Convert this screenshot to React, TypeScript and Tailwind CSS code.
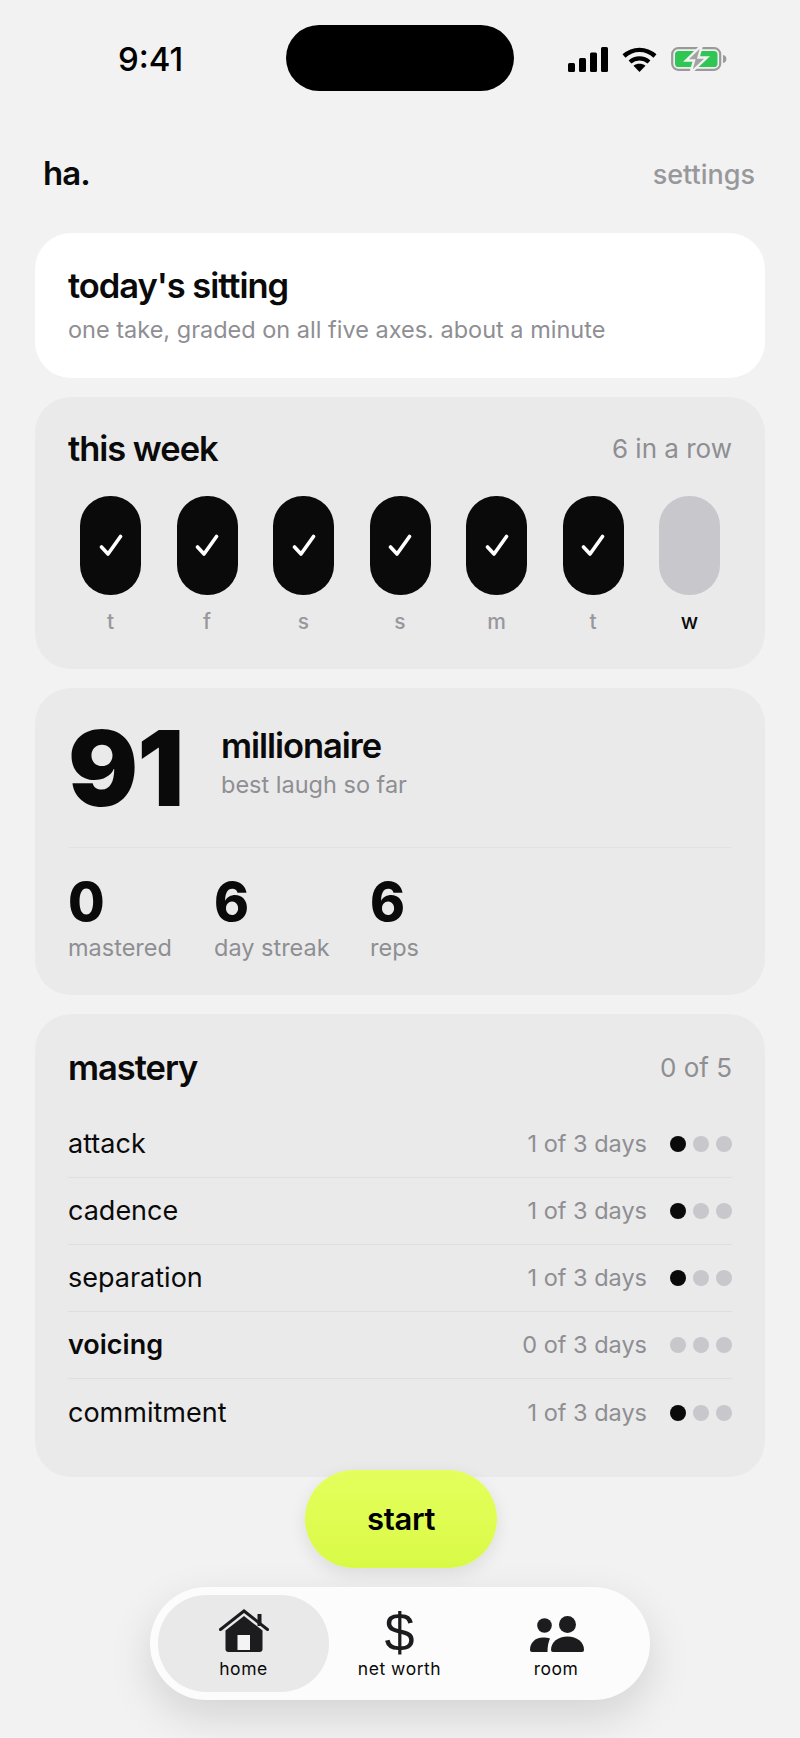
import React from 'react'

const DAYS = [
  { label: 't', done: true },
  { label: 'f', done: true },
  { label: 's', done: true },
  { label: 's', done: true },
  { label: 'm', done: true },
  { label: 't', done: true },
  { label: 'w', done: false },
]

const AXES = [
  { name: 'attack', days: 1 },
  { name: 'cadence', days: 1 },
  { name: 'separation', days: 1 },
  { name: 'voicing', days: 0, bold: true },
  { name: 'commitment', days: 1 },
]

const STATS = [
  { value: '0', label: 'mastered', width: 'w-[146px]' },
  { value: '6', label: 'day streak', width: 'w-[156px]' },
  { value: '6', label: 'reps', width: '' },
]

function StatusIcons() {
  return (
    <div className="flex items-center gap-[14px]">
      <svg width="40" height="25" viewBox="0 0 40 25" fill="#000">
        <rect x="0" y="16" width="7" height="9" rx="1.5" />
        <rect x="11" y="11" width="7" height="14" rx="1.5" />
        <rect x="22" y="5.500" width="7" height="19.500" rx="1.5" />
        <rect x="33" y="0" width="7" height="25" rx="1.5" />
      </svg>
      <svg width="35" height="25" viewBox="0 0 35 25" fill="none" stroke="#000">
        <path d="M2 9C11 .8 24 .8 33 9" strokeWidth="4.400" />
        <path d="M8 15c5.500-4.800 13.500-4.800 19 0" strokeWidth="4.200" />
        <path d="M17.500 25l-6-6.300c3.500-2.600 8.500-2.600 12 0z" fill="#000" stroke="none" />
      </svg>
      <svg width="56" height="28" viewBox="0 0 56 28" fill="none">
        <rect x="1.200" y="3.200" width="48" height="21.600" rx="6" stroke="#9a9a9a" strokeWidth="2.200" />
        <rect x="4" y="6" width="42.500" height="16" rx="3.600" fill="#2fc653" />
        <path d="M52 10c2.400.6 3.400 2 3.400 4s-1 3.400-3.400 4z" fill="#9a9a9a" />
        <path d="M31 0L15 15.500h8L19.500 28 36 12.500h-8.500z" fill="#a3a3a3" stroke="#f2f2f2" strokeWidth="2.400" />
      </svg>
    </div>
  )
}

function Check() {
  return (
    <svg width="24" height="23" viewBox="0 0 24 23" fill="none" stroke="#fff" strokeWidth="3.600" strokeLinecap="round" strokeLinejoin="round">
      <path d="M2.500 13L9 20L21.500 2.500" />
    </svg>
  )
}

function HomeIcon() {
  return (
    <svg width="50" height="44" viewBox="0 0 50 44" fill="#1c1c1e">
      <path d="M1.500 20.500L25 2L48.500 20.500" fill="none" stroke="#1c1c1e" strokeWidth="3" strokeLinecap="round" strokeLinejoin="miter" />
      <rect x="38.500" y="5" width="4" height="12" />
      <path d="M6.500 21.500L25 7l18.500 14.500V40a3 3 0 0 1-3 3h-31a3 3 0 0 1-3-3z" />
      <rect x="18.500" y="26" width="12.500" height="15" fill="#f4f4f4" />
    </svg>
  )
}

function RoomIcon() {
  return (
    <svg width="56" height="38" viewBox="0 0 56 38" fill="#1c1c1e">
      <circle cx="14.500" cy="10.500" r="7.300" />
      <circle cx="37.500" cy="9.500" r="8.500" />
      <path d="M0 35c0-7 5-12.500 13-12.500 2.500 0 5 .4 7 1-1.500 3.500-2.500 7.500-2.500 13.500H2a2 2 0 0 1-2-2z" />
      <path d="M21 35c0-8 7-13.500 16.500-13.500S54 27 54 35a2 2 0 0 1-2 2H23a2 2 0 0 1-2-2z" />
    </svg>
  )
}

export default function App() {
  return (
    <div className="relative h-[1738px] w-[800px] overflow-hidden bg-[#f2f2f2] font-['Inter',sans-serif] text-[#0a0a0a]">
      {/* status bar */}
      <div className="flex h-[91px] items-start pl-[118px] pt-[25px]">
        <span className="mt-[16px] w-[168px] text-[33px] leading-[36px] font-medium text-black">9:41</span>
        <div className="h-[66px] w-[228px] rounded-[33px] bg-black" />
        <div className="ml-[54px] mt-[20px]">
          <StatusIcons />
        </div>
      </div>

      {/* header */}
      <div className="flex items-start justify-between pl-[43px] pr-[45px] pt-[62px]">
        <span className="text-[33px] leading-[40px] font-semibold tracking-[-0.03em]">ha.</span>
        <span className="mt-[2px] text-[27px] leading-[40px] font-medium text-[#98989c]">settings</span>
      </div>

      <div className="mx-[35px] mt-[38px] flex flex-col gap-[19px]">
        {/* today's sitting */}
        <div className="h-[145px] rounded-[36px] bg-white px-[33px] pt-[32px]">
          <div className="text-[34.500px] leading-[42px] font-semibold tracking-[-0.03em]">today's sitting</div>
          <div className="mt-[8px] text-[23.500px] leading-[30px] text-[#8e8e93]">one take, graded on all five axes. about a minute</div>
        </div>

        {/* this week */}
        <div className="h-[272px] rounded-[36px] bg-[#eaeaea] px-[33px] pt-[31px]">
          <div className="flex items-center justify-between">
            <span className="text-[34.500px] leading-[42px] font-semibold tracking-[-0.03em]">this week</span>
            <span className="text-[26px] leading-[42px] text-[#8e8e93]">6 in a row</span>
          </div>
          <div className="mt-[26px] flex justify-between px-[12px]">
            {DAYS.map((d, i) => (
              <div key={i} className="flex w-[61px] flex-col items-center">
                <div className={`flex h-[99px] w-[61px] items-center justify-center rounded-[30px] ${d.done ? 'bg-[#0a0a0a]' : 'bg-[#c7c7cc]'}`}>
                  {d.done && <Check />}
                </div>
                <span className={`mt-[13px] text-[21px] leading-[28px] font-medium ${d.done ? 'text-[#98989c]' : 'text-[#0a0a0a]'}`}>{d.label}</span>
              </div>
            ))}
          </div>
        </div>

        {/* best laugh */}
        <div className="h-[307px] rounded-[36px] bg-[#eaeaea] px-[33px] pt-[25px]">
          <div className="flex items-center border-b border-[#e2e2e2] pb-[24px]">
            <span className="w-[153px] text-[104px] leading-[110px] font-black tracking-[-0.01em]">91</span>
            <div className="pb-[10px]">
              <div className="text-[34.500px] leading-[40px] font-semibold tracking-[-0.03em]">millionaire</div>
              <div className="mt-[4px] text-[23.500px] leading-[30px] text-[#8e8e93]">best laugh so far</div>
            </div>
          </div>
          <div className="mt-[28px] flex">
            {STATS.map((s) => (
              <div key={s.label} className={s.width}>
                <div className="text-[53px] leading-[52px] font-extrabold">{s.value}</div>
                <div className="mt-[5px] text-[23.500px] leading-[30px] text-[#8e8e93]">{s.label}</div>
              </div>
            ))}
          </div>
        </div>

        {/* mastery */}
        <div className="h-[463px] rounded-[36px] bg-[#eaeaea] px-[33px] pt-[33px]">
          <div className="flex items-center justify-between pb-[22px]">
            <span className="text-[34.500px] leading-[42px] font-semibold tracking-[-0.03em]">mastery</span>
            <span className="text-[26px] leading-[42px] text-[#8e8e93]">0 of 5</span>
          </div>
          {AXES.map((a, i) => (
            <div key={a.name} className={`flex h-[67px] items-center justify-between ${i < AXES.length - 1 ? 'border-b border-[#dfdfdf]' : ''}`}>
              <span className={`text-[27px] leading-[32px] ${a.bold ? 'font-semibold' : ''}`}>{a.name}</span>
              <div className="flex items-center gap-[23px]">
                <span className="text-[23.500px] leading-[30px] text-[#8e8e93]">{a.days} of 3 days</span>
                <div className="flex gap-[7px]">
                  {[0, 1, 2].map((n) => (
                    <div key={n} className={`h-[16px] w-[16px] rounded-full ${n < a.days ? 'bg-[#0a0a0a]' : 'bg-[#c7c7cc]'}`} />
                  ))}
                </div>
              </div>
            </div>
          ))}
        </div>
      </div>

      {/* start button */}
      <div className="absolute left-[305px] top-[1470px] flex h-[98px] w-[192px] items-center justify-center rounded-[49px] bg-gradient-to-b from-[#e4ff5c] to-[#d9fa46] shadow-[0_6px_18px_rgba(0,0,0,0.09)]">
        <span className="text-[31px] font-semibold tracking-[-0.01em] text-black">start</span>
      </div>

      {/* tab bar */}
      <div className="absolute left-[150px] top-[1587px] flex h-[113px] w-[500px] rounded-[57px] bg-[#fcfcfc] p-[8px] shadow-[0_16px_44px_rgba(0,0,0,0.13)]">
        <div className="flex h-full w-[171px] flex-col items-center justify-end rounded-[48px] bg-[#e9e9e9] pb-[12px]">
          <HomeIcon />
          <span className="mt-[5px] text-[17.500px] leading-[22px] tracking-[0.03em]">home</span>
        </div>
        <div className="flex h-full w-[141px] flex-col items-center justify-end pb-[12px]">
          <span className="font-['Liberation_Sans',sans-serif] text-[54px] leading-[52px] text-[#1c1c1e]">$</span>
          <span className="text-[17.500px] leading-[22px] tracking-[0.03em]">net worth</span>
        </div>
        <div className="flex h-full flex-1 flex-col items-center justify-end pb-[12px]">
          <div className="ml-[3px]">
            <RoomIcon />
          </div>
          <span className="mt-[5px] text-[17.500px] leading-[22px] tracking-[0.03em]">room</span>
        </div>
      </div>
    </div>
  )
}
